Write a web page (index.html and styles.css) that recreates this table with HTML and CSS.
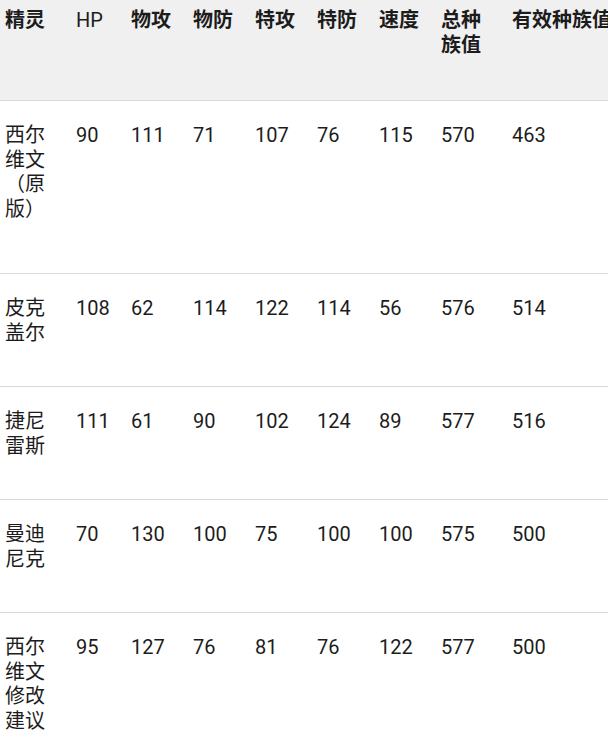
FILE: index.html
```html
<!DOCTYPE html>
<html lang="zh-CN">
<head>
<meta charset="utf-8">
<title>精灵种族值</title>
<link rel="stylesheet" href="styles.css">
</head>
<body>
<div class="wrap">
<table class="stats">
  <colgroup>
    <col class="c-name">
    <col class="c-hp">
    <col class="c-std"><col class="c-std"><col class="c-std"><col class="c-std"><col class="c-std">
    <col class="c-total">
    <col class="c-eff">
  </colgroup>
  <thead>
    <tr>
      <th>精灵</th><th class="latin">HP</th><th>物攻</th><th>物防</th><th>特攻</th><th>特防</th><th>速度</th><th>总种族值</th><th>有效种族值</th>
    </tr>
  </thead>
  <tbody>
    <tr class="tall">
      <td>西尔维文（原版）</td><td>90</td><td>111</td><td>71</td><td>107</td><td>76</td><td>115</td><td>570</td><td>463</td>
    </tr>
    <tr>
      <td>皮克盖尔</td><td>108</td><td>62</td><td>114</td><td>122</td><td>114</td><td>56</td><td>576</td><td>514</td>
    </tr>
    <tr>
      <td>捷尼雷斯</td><td>111</td><td>61</td><td>90</td><td>102</td><td>124</td><td>89</td><td>577</td><td>516</td>
    </tr>
    <tr>
      <td>曼迪尼克</td><td>70</td><td>130</td><td>100</td><td>75</td><td>100</td><td>100</td><td>575</td><td>500</td>
    </tr>
    <tr class="tall">
      <td>西尔维文修改建议</td><td>95</td><td>127</td><td>76</td><td>81</td><td>76</td><td>122</td><td>577</td><td>500</td>
    </tr>
  </tbody>
</table>
</div>
</body>
</html>
```

FILE: styles.css
```css
html, body {
  margin: 0;
  padding: 0;
  overflow: hidden;
  background: #ffffff;
}

.wrap {
  width: 608px;
  height: 740px;
  overflow: hidden;
}

.stats {
  table-layout: fixed;
  width: 640px;
  border-collapse: collapse;
  font-family: Roboto, "Noto Sans CJK SC", sans-serif;
  font-size: 20px;
  line-height: 24.5px;
  color: #1c1c1c;
}

.c-name { width: 71px; }
.c-hp { width: 55px; }
.c-std { width: 62px; }
.c-total { width: 71px; }
.c-eff { width: 133px; }

.stats th,
.stats td {
  text-align: left;
  vertical-align: top;
  padding: 22px 10px 41px 5px;
  border-bottom: 1px solid #d9d9d9;
  word-break: normal;
}

.stats thead th {
  background: #f0f0f0;
  font-weight: bold;
  padding-top: 8px;
  padding-bottom: 43px;
  white-space: normal;
}

.stats thead th.latin {
  font-weight: normal;
}

.stats thead th:last-child {
  white-space: nowrap;
}

.stats tr.tall td {
  padding-bottom: 52px;
}
```
